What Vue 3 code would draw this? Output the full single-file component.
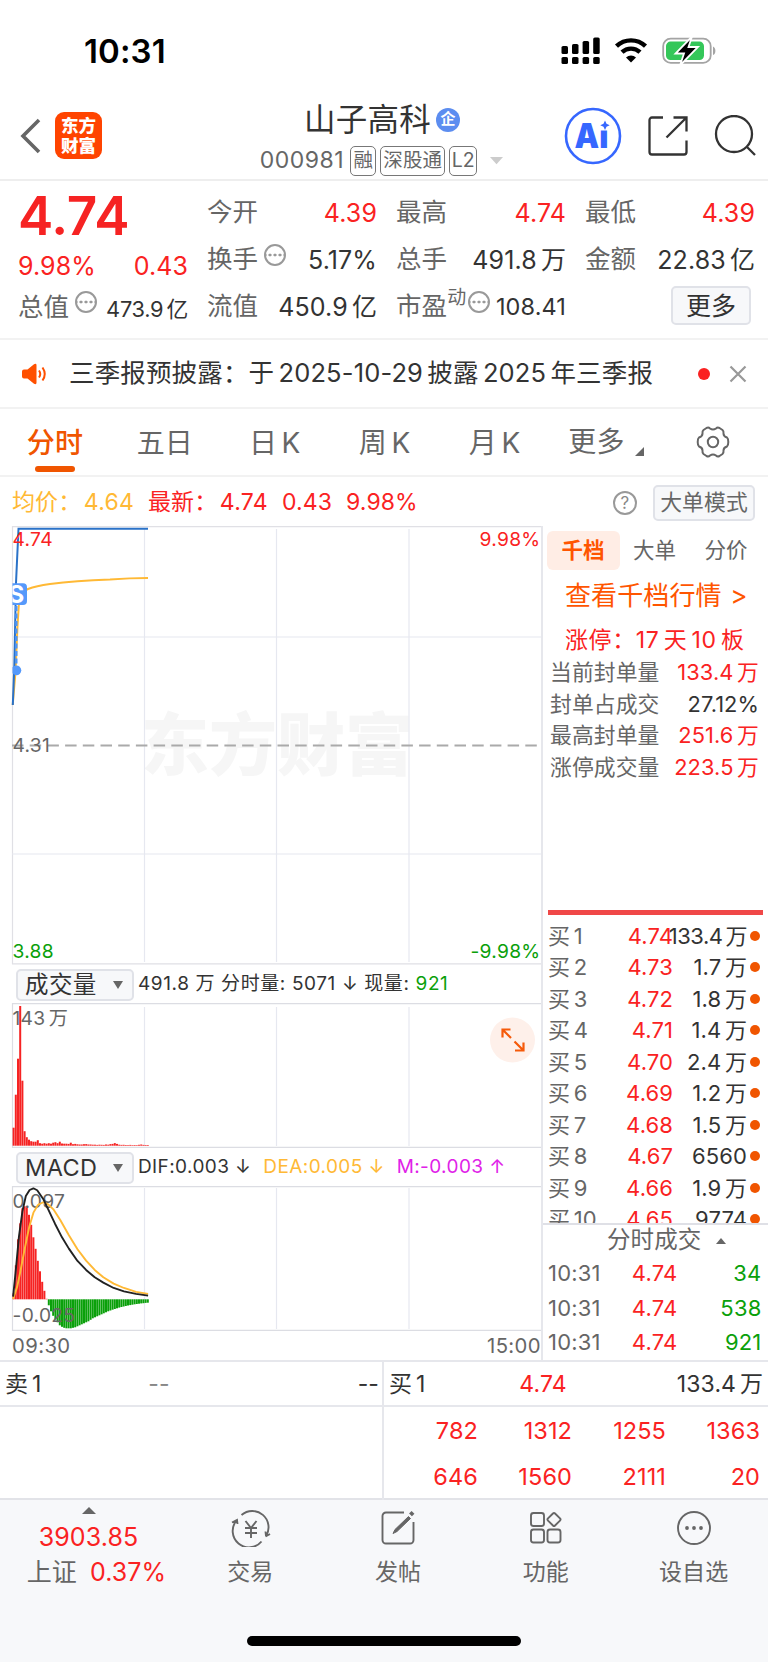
<script setup>
import { ref, computed } from 'vue';

const tabs = ['分时', '五日', '日 K', '周 K', '月 K'];
const activeTab = ref('分时');

const bookTabs = ['千档', '大单', '分价'];
const activeBook = ref('千档');

const limitInfo = [
  { label: '当前封单量', value: '133.4 万', red: true },
  { label: '封单占成交', value: '27.12%', red: false },
  { label: '最高封单量', value: '251.6 万', red: true },
  { label: '涨停成交量', value: '223.5 万', red: true },
];

const bids = [
  { price: '4.74', vol: '133.4 万' },
  { price: '4.73', vol: '1.7 万' },
  { price: '4.72', vol: '1.8 万' },
  { price: '4.71', vol: '1.4 万' },
  { price: '4.70', vol: '2.4 万' },
  { price: '4.69', vol: '1.2 万' },
  { price: '4.68', vol: '1.5 万' },
  { price: '4.67', vol: '6560' },
  { price: '4.66', vol: '1.9 万' },
  { price: '4.65', vol: '9774' },
];

const trades = [
  { time: '10:31', price: '4.74', vol: '34' },
  { time: '10:31', price: '4.74', vol: '538' },
  { time: '10:31', price: '4.74', vol: '921' },
];

const queue = ['782', '1312', '1255', '1363', '646', '1560', '2111', '20'];

// 1分钟一根，柱间距
const STEP = 2.2;
const gridX = [144.5, 276.5, 409];

const volumes = [
  18, 51, 87, 139.7, 65, 14.5, 8.5, 6, 4.5, 4, 4, 5.5, 2.5, 2, 2.5, 2, 2.5, 2, 3, 3.5, 2.5,
  4, 2.2, 2, 2, 1.8, 3, 1.5, 1.8, 1.4, 1.2, 1.2, 1.5, 1.6, 1.2, 1.2, 1, 1, 0.8, 1, 0.9,
  0.8, 1.2, 1, 1.6, 1.8, 2.6, 1.8, 1, 0.8, 0.9, 0.7, 0.6, 0.8, 0.6, 0.7, 0.6, 0.9, 1.2, 0.8, 0.7, 0.7,
];

const macd = [
  6, 34, 60, 76, 91, 93, 93, 84.5, 74.5, 62, 50.5, 38.5, 28, 17.5, 8.5, 0.5,
  -6, -12, -16.5, -20, -23, -26, -27.5, -28.5, -29, -29, -29, -28.5, -28, -27, -26, -25, -24,
  -23, -22, -20.5, -19, -18, -17, -16, -15, -14, -13, -12, -11.2, -10.4, -9.7,
  -9, -8.3, -7.7, -7.2, -6.7, -6.2, -5.8, -5.4, -5, -4.7, -4.4, -4.1, -3.9, -3.6, -3.4,
];

const toBars = (values, zero) => values.map((v, i) => ({
  x: 12.6 + i * STEP,
  y: v > 0 ? zero - v : zero,
  h: Math.abs(v),
  up: v > 0,
}));

const volumeBars = computed(() => toBars(volumes, 142.7));
const macdBars = computed(() => toBars(macd, 113.3));
</script>

<template>
  <div class="page">
    <div class="status-bar">
      <span class="clock">10:31</span>
      <svg class="status-icons" width="160" height="30" viewBox="0 0 160 30">
        <g fill="#000">
          <rect x="3.5" y="10" width="6.5" height="8" rx="1.6" />
          <rect x="14" y="8" width="6.5" height="10" rx="1.6" />
          <rect x="24.6" y="5" width="6.5" height="13" rx="1.6" />
          <rect x="35.2" y="1.5" width="6.5" height="16.5" rx="1.6" />
          <rect v-for="x in [3.5, 14, 24.6, 35.2]" :key="x" :x="x" y="21" width="6.5" height="7" rx="1.6" />
        </g>
        <g fill="none" stroke="#000" stroke-width="4.4">
          <path d="M58.5 10.2a21 21 0 0 1 29 0" />
          <path d="M64 16.2a13 13 0 0 1 18 0" />
        </g>
        <path d="M73 26.5l-5-5a7.2 7.2 0 0 1 10 0z" fill="#000" />
        <rect x="105.2" y="2.7" width="47.5" height="24.2" rx="7.5" fill="none" stroke="#a4a4a4" stroke-width="1.8" />
        <rect x="108" y="5.6" width="38" height="18.4" rx="4.5" fill="#34c759" />
        <path d="M155 10.5c3.2 1.3 3.2 7.3 0 8.6z" fill="#a4a4a4" />
        <path d="M134 .5l-16.500 17h8.500l-4 12 18-18.500h-9.500z" fill="#000" stroke="#fff" stroke-width="1.800" />
      </svg>
    </div>

    <div class="header">
      <svg class="back" width="22" height="38" viewBox="0 0 22 38">
        <path d="M19 3L3 19l16 16" fill="none" stroke="#666" stroke-width="3.6" />
      </svg>
      <div class="logo"><span>东方</span><span>财富</span></div>
      <div class="title">
        <div class="name">山子高科<i class="corp">企</i></div>
        <div class="code">
          <span class="digits">000981</span>
          <span class="tag t1">融</span>
          <span class="tag t3">深股通</span>
          <span class="tag t2">L2</span>
          <svg width="14" height="8" viewBox="0 0 14 8"><path d="M0 0h13l-6.5 7.2z" fill="#ccc" /></svg>
        </div>
      </div>
      <div class="actions">
        <svg width="58" height="58" viewBox="0 0 58 58">
          <circle cx="29" cy="29" r="27" fill="#fff" stroke="#3667ff" stroke-width="2.6" />
          <text x="10.5" y="40.5" class="ai" textLength="34" lengthAdjust="spacingAndGlyphs">Ai</text>
          <rect x="35.5" y="12" width="12" height="11.5" fill="#fff" />
          <path d="M41 13.500l1.500 3.200 3.200 1.500-3.200 1.500-1.500 3.200-1.500-3.200-3.200-1.500 3.200-1.500z" fill="#3667ff" />
        </svg>
        <svg width="40" height="40" viewBox="0 0 40 40" fill="none" stroke="#333" stroke-width="2.3">
          <path d="M15 1.5H4a2.5 2.5 0 0 0-2.5 2.5v32A2.5 2.5 0 0 0 4 38.5h32a2.5 2.5 0 0 0 2.5-2.500V24.5M25.5 1.5h13v14M38 2L18.5 21.5" />
        </svg>
        <svg width="42" height="42" viewBox="0 0 42 42" fill="none" stroke="#333" stroke-width="2.3">
          <circle cx="20" cy="19" r="18" />
          <path d="M32.5 31.5l8.5 8.5" />
        </svg>
      </div>
    </div>

    <div class="quote">
      <div class="col first">
        <div class="big">4.74</div>
        <div class="cell"><b class="red">9.98%</b><b class="red">0.43</b></div>
        <div class="cell"><span>总值</span><i class="more-dot"></i><b class="sm">473.9 亿</b></div>
      </div>
      <div class="col">
        <div class="cell"><span>今开</span><b class="red">4.39</b></div>
        <div class="cell"><span>换手</span><i class="more-dot"></i><b>5.17%</b></div>
        <div class="cell"><span>流值</span><b>450.9 亿</b></div>
      </div>
      <div class="col">
        <div class="cell"><span>最高</span><b class="red">4.74</b></div>
        <div class="cell"><span>总手</span><b>491.8 万</b></div>
        <div class="cell"><span>市盈</span><em>动</em><i class="more-dot tight"></i><b class="pe">108.41</b></div>
      </div>
      <div class="col">
        <div class="cell"><span>最低</span><b class="red">4.39</b></div>
        <div class="cell"><span>金额</span><b>22.83 亿</b></div>
        <div class="cell"><button class="btn-more">更多</button></div>
      </div>
    </div>

    <div class="notice">
      <svg width="28" height="24" viewBox="0 0 28 24">
        <path d="M1 9.5Q1 7.5 3 7.5h3.5L13 2.3q2.5-1.3 2.5 1v17.4q0 2.3-2.5 1L6.5 16.5H3q-2 0-2-2z" fill="#ff5000" />
        <path d="M18 8.5q2.5 3.5 0 7M21.5 5.5q4.5 6.5 0 13" fill="none" stroke="#ff5000" stroke-width="2" />
      </svg>
      <span class="notice-text">三季报预披露：于 2025-10-29 披露 2025 年三季报</span>
      <i class="dot"></i>
      <svg width="18" height="18" viewBox="0 0 18 18"><path d="M1.5 1.5l15 15M16.5 1.5l-15 15" stroke="#999" stroke-width="2.2" /></svg>
    </div>

    <div class="tabs">
      <div v-for="t in tabs" :key="t" class="tab" :class="{ active: t === activeTab }" @click="activeTab = t">{{ t }}</div>
      <div class="tab more">更多<svg width="10" height="10" viewBox="0 0 10 10"><path d="M9 0v9H0z" fill="#666" /></svg></div>
      <svg class="gear" width="34" height="34" viewBox="0 0 34 34" fill="none" stroke="#666" stroke-width="2" stroke-linejoin="round">
        <path d="M10.500 3Q12.500 2 14 3.500 17 5.500 20 3.500 21.500 2 23.500 3L26.500 5Q27.800 6 27.500 8.500 27.500 11.500 31 12.500 32.300 13.500 32.300 17 32.300 20.500 31 21.500 27.500 22.500 27.500 25.500 27.800 28 26.500 29L23.500 31Q21.500 32 20 30.500 17 28.500 14 30.500 12.500 32 10.500 31L7.500 29Q6.200 28 6.500 25.500 6.500 22.500 3 21.500 1.700 20.500 1.700 17 1.700 13.500 3 12.500 6.500 11.500 6.500 8.500 6.200 6 7.500 5z" />
        <circle cx="17" cy="17" r="5.2" />
      </svg>
    </div>

    <div class="summary">
      <span class="avg">均价：<b>4.64</b></span>
      <span class="red last">最新：<b>4.74</b></span>
      <span class="red">0.43</span>
      <span class="red pct">9.98%</span>
      <i class="help">?</i>
      <button class="btn-mode">大单模式</button>
    </div>

    <div class="main">
      <div class="charts">
        <svg width="541" height="438.5" viewBox="0 0 541 438.5">
          <text x="141" y="244" class="watermark" textLength="272">东方财富</text>
          <g stroke="#e6e8f0" stroke-width="1.2">
            <path d="M12 .6H541M12.5 0V438M12 437.8H541" stroke="#e0e0e5" />
            <path d="M12 111H541M12 328H541" />
            <path v-for="x in gridX" :key="x" :d="`M${x} 3V436`" />
          </g>
          <path d="M12 219.6H538" stroke="#aaa" stroke-width="2" stroke-dasharray="11.500 6.200" />
          <g fill="none" stroke-width="2">
            <path d="M12.700 179L15.500 146 17.500 100 19 76Q20 66 28 63 36 60 50 58 75 54.800 110 53.500 130 52 148 52" stroke="#ffb935" />
            <path d="M12.800 179L14.300 140.700 16 57 18.500 2.700H148" stroke="#2a72c8" />
            <path d="M16.300 80V139" stroke="#4c94f7" stroke-width="2.400" stroke-dasharray="5 2.500" />
          </g>
          <path d="M12.500 57.300H23q4 0 4 4V75q0 4-4 4H12.500z" fill="#5599fb" />
          <svg x="12.500" y="54" width="18" height="28"><text x="-4" y="23" class="sell">S</text></svg>
          <path d="M12.500 141.300a4.900 4.900 0 1 1 0 6z" fill="#5599fb" />
          <text x="12.500" y="19.800" class="axis red-t">4.74</text>
          <text x="540.500" y="19.800" class="axis red-t end">9.98%</text>
          <text x="12.500" y="226" class="axis">4.31</text>
          <text x="12.500" y="431.500" class="axis green-t">3.88</text>
          <text x="540.500" y="431.500" class="axis green-t end">-9.98%</text>
        </svg>

        <div class="indicator">
          <button class="picker">成交量<i></i></button>
          <span class="volume">491.8 万 分时量: 5071 ↓ 现量: <b class="green">921</b></span>
        </div>
        <svg width="541" height="145" viewBox="0 0 541 145">
          <g stroke="#e6e8f0" stroke-width="1.2">
            <path d="M12 .6H541M12.5 0V145M12 144.4H541" stroke="#dcdde3" />
            <path v-for="x in gridX" :key="x" :d="`M${x} 4V143`" />
          </g>
          <text x="12.500" y="22.300" class="axis">143 万</text>
          <rect v-for="(b, i) in volumeBars" :key="i" :x="b.x" :y="b.y" width="2" :height="b.h" fill="#f62323" />
          <circle cx="512.500" cy="37" r="22.500" fill="#fef0ea" />
          <path d="M502.500 34.500v-8h8M503 27l8 8M523.500 39.500v8h-8.500M523 47l-8.500-8.500" fill="none" stroke="#f55a0a" stroke-width="2.200" />
        </svg>

        <div class="indicator">
          <button class="picker">MACD<i></i></button>
          <span>DIF:0.003 ↓</span>
          <span class="dea">DEA:0.005 ↓</span>
          <span class="m">M:-0.003 ↑</span>
        </div>
        <svg width="541" height="145" viewBox="0 0 541 145">
          <g stroke="#e6e8f0" stroke-width="1.2">
            <path d="M12 .6H541M12.5 0V145M12 144.4H541" stroke="#dcdde3" />
            <path v-for="x in gridX" :key="x" :d="`M${x} 2V143`" />
          </g>
          <rect v-for="(b, i) in macdBars" :key="i" :x="b.x" :y="b.y" width="2" :height="b.h" :fill="b.up ? '#f62323' : '#0aa00a'" />
          <text x="12.500" y="22" class="axis">0.097</text>
          <text x="12.500" y="136" class="axis">-0.025</text>
          <g transform="translate(0 -226) scale(.3444 .3333)" fill="none" stroke-width="5.500" stroke-linejoin="round">
            <polyline stroke="#ffb935" points="38,1017 50,980 60,930 72,865 85,800 97,758 110,735 125,727 140,733 155,748 175,780 200,826 225,868 250,902 275,930 300,952 330,971 360,984 395,996 430,1002" />
            <polyline stroke="#222" points="38,1010 45,940 55,830 65,755 75,708 86,690 97,685 108,691 125,716 140,748 160,792 180,832 200,866 225,903 250,930 275,952 300,968 330,984 360,994 395,1002 430,1007" />
          </g>
        </svg>
        <div class="times"><span>09:30</span><span>15:00</span></div>
      </div>

      <div class="book">
        <div class="book-tabs">
          <div v-for="t in bookTabs" :key="t" :class="{ active: t === activeBook }" @click="activeBook = t">{{ t }}</div>
        </div>
        <div class="link">查看千档行情 &gt;</div>
        <div class="streak">涨停：17 天 10 板</div>
        <div v-for="row in limitInfo" :key="row.label" class="limit-row">
          <span>{{ row.label }}</span><b :class="{ red: row.red }">{{ row.value }}</b>
        </div>
        <div class="bar"></div>
        <div class="bids">
          <div v-for="(b, i) in bids" :key="i" class="bid">
            <span>买 {{ i + 1 }}</span>
            <b class="red">{{ b.price }}</b>
            <b class="vol" :class="{ long: b.vol.length > 6 }">{{ b.vol }}</b>
            <i></i>
          </div>
        </div>
        <div class="trade-title">分时成交<i></i></div>
        <div v-for="(t, i) in trades" :key="i" class="trade">
          <span>{{ t.time }}</span><b class="red">{{ t.price }}</b><b class="green">{{ t.vol }}</b>
        </div>
      </div>
    </div>

    <div class="depth">
      <div class="side">
        <div class="level"><span>卖 1</span><span class="none">--</span><span>--</span></div>
      </div>
      <div class="side buy">
        <div class="level"><span>买 1</span><span class="red">4.74</span><span>133.4 万</span></div>
        <div class="queue"><span v-for="(q, i) in queue" :key="i">{{ q }}</span></div>
      </div>
    </div>

    <div class="footer">
      <div class="index">
        <i></i>
        <b>3903.85</b>
        <div class="sh"><span>上证</span><b>0.37%</b></div>
      </div>
      <div class="nav">
        <svg width="40" height="38" viewBox="0 0 40 38" fill="none" stroke="#666" stroke-width="1.9">
          <path d="M10.5 6A16.300 16.300 0 0 1 35 27M35 27l-.5-4.500M34.500 27.500l4.500-2.500M30.500 32.500A16.300 16.300 0 0 1 5.500 11.500M1 13.500l5-2.500 .5 4" />
          <path d="M14.500 12l5.500 7 5.500-7M20 19v10M14 19h12M14 24h12" />
        </svg>
        <span>交易</span>
      </div>
      <div class="nav">
        <svg width="40" height="38" viewBox="0 0 40 38" fill="none" stroke="#666" stroke-width="1.9">
          <path d="M25 3.500H7A3.500 3.500 0 0 0 3.500 7v24A3.500 3.500 0 0 0 7 34.500h24a3.500 3.500 0 0 0 3.500-3.500V13" />
          <path d="M14 24.500l2-4L29.500 7.500l2 2L18 22.500z" fill="#666" stroke-width="1" />
          <path d="M31.500 5.800l2.500-2.500" stroke-width="4" />
        </svg>
        <span>发帖</span>
      </div>
      <div class="nav">
        <svg width="40" height="38" viewBox="0 0 40 38" fill="none" stroke="#666" stroke-width="1.9">
          <rect x="5" y="4" width="13" height="13" rx="2.5" />
          <rect x="5" y="20.5" width="13" height="13" rx="2.5" />
          <rect x="21.5" y="20.5" width="13" height="13" rx="2.5" />
          <rect x="23" y="5.5" width="10" height="10" rx="1.5" transform="rotate(45 28 10.5)" />
        </svg>
        <span>功能</span>
      </div>
      <div class="nav">
        <svg width="40" height="38" viewBox="0 0 40 38">
          <circle cx="20" cy="19" r="16" fill="none" stroke="#666" stroke-width="1.9" />
          <circle v-for="x in [13, 20, 27]" :key="x" :cx="x" cy="19" r="1.9" fill="#666" />
        </svg>
        <span>设自选</span>
      </div>
      <div class="home"></div>
    </div>
  </div>
</template>

<style>
body { margin: 0; background: #fff; }
</style>

<style scoped>
.page { width: 768px; height: 1663px; overflow: hidden; display: flex; flex-direction: column; background: #fff; color: #333; font-family: Inter, "Noto Sans CJK SC", sans-serif; font-size: 23px; font-weight: 400; line-height: 1.2; letter-spacing: 0.1px; }
.page * { box-sizing: border-box; word-spacing: -0.12em; }
svg { display: block; flex: none; }
b { font-weight: inherit; }
i, em { font-style: normal; }
button { font: inherit; color: inherit; letter-spacing: inherit; padding: 0; border: 2px solid #e0e2e8; border-radius: 5px; background: #f7f8fa; }
span, b { white-space: pre; }
.red { color: #fa2222; }
.green { color: #0aa00a; }

.status-bar { height: 90px; padding: 36px 48px 0 84px; display: flex; justify-content: space-between; }
.clock { font-size: 33px; font-weight: 600; line-height: 31px; color: #000; letter-spacing: 0.1px; }
.status-icons { margin-right: 2px; }

.header { height: 91px; border-bottom: 2px solid #eee; display: flex; }
.back { margin: 27px 0 0 20px; }
.logo { margin: 22px 0 0 13px; width: 47px; height: 47px; border-radius: 9px; background: #ff4400; color: #fff; font-size: 17.5px; font-weight: 900; line-height: 19.5px; padding-top: 4px; display: flex; flex-direction: column; align-items: center; }
.title { width: 300px; margin-left: 130px; padding-top: 10px; display: flex; flex-direction: column; align-items: center; }
.name { display: flex; align-items: center; font-size: 31.5px; line-height: 38px; height: 40px; letter-spacing: 0.3px; }
.corp { width: 24px; height: 24px; margin-left: 5px; border-radius: 50%; background: #5c8df0; color: #fff; font-size: 15px; font-weight: 700; line-height: 22px; text-align: center; }
.code { display: flex; align-items: center; height: 32px; margin-top: 5px; color: #666; }
.digits { font-size: 23px; margin-right: 6px; letter-spacing: 0.5px; }
.tag { height: 30px; border: 1.5px solid #777; border-radius: 5px; margin-right: 4px; font-size: 19.5px; line-height: 27px; text-align: center; }
.t1 { width: 26px; }
.t3 { width: 65px; }
.t2 { width: 28px; margin-right: 13px; }
.actions { margin-left: auto; padding: 17px 12px 0 0; display: flex; align-items: center; height: 75px; gap: 26px; }
.ai { font-size: 34px; font-weight: 900; fill: #3667ff; }

.quote { height: 159px; border-bottom: 2px solid #f2f2f2; padding: 8px 13px 0 18px; display: grid; grid-template-columns: 170px 170px 170px 170px; column-gap: 19px; }
.col { display: flex; flex-direction: column; }
.big { height: 57px; line-height: 54px; font-size: 53px; font-weight: 600; color: #f62323; letter-spacing: -0.2px; }
.cell { height: 47px; display: flex; align-items: center; justify-content: space-between; font-size: 25px; }
.first .cell { height: 40px; }
.first .cell:last-child { height: 42px; }
.cell span { color: #666; font-size: 25.5px; }
.cell .sm { font-size: 21.8px; padding-top: 4px; letter-spacing: -0.3px; }
.cell em { font-size: 19px; color: #666; margin-top: -16px; }
.cell .pe { font-size: 23.5px; padding-top: 2px; margin-left: auto; }
.more-dot { width: 22px; height: 22px; border: 2px solid #999; border-radius: 50%; margin: -10px auto 0 6px; background: radial-gradient(circle, #999 1.3px, transparent 1.7px) center / 5px 18px repeat-x; }
.more-dot.tight { margin: -10px 0 0 2px; }
.btn-more { width: 80px; height: 39px; margin: -2px 4px 0 auto; }

.notice { height: 69px; border-bottom: 2px solid #f2f2f2; display: flex; align-items: center; padding: 0 21px; }
.notice-text { margin-left: 20px; width: 632px; font-size: 25.5px; letter-spacing: 0.15px; }
.dot { width: 12px; height: 12px; border-radius: 50%; background: #fa2222; margin-right: 19px; }

.tabs { height: 68px; border-bottom: 2px solid #f2f2f2; display: flex; align-items: center; color: #666; font-size: 28px; }
.tab { width: 109.9px; height: 68px; line-height: 70px; text-align: center; white-space: pre; }
.tab.active { color: #f05500; font-weight: 500; display: flex; flex-direction: column; align-items: center; }
.tab.active::after { content: ""; width: 40px; height: 6px; border-radius: 3px; background: #f05500; margin-top: -12px; flex: none; }
.tab.more { width: 100px; margin-left: 7px; display: flex; align-items: center; justify-content: center; }
.tab.more svg { margin: 20px 0 0 10px; }
.gear { margin-left: 40px; }

.summary { height: 49px; display: flex; align-items: center; padding: 2px 13px 0 12px; }
.avg { color: #ffb935; width: 136px; }
.summary span b { margin-left: 2.5px; letter-spacing: 0.3px; }
.last { width: 134px; }
.pct { margin-left: 14px; }
.help { width: 24px; height: 24px; border: 2px solid #999; border-radius: 50%; margin-left: auto; font-size: 17px; line-height: 20px; text-align: center; color: #888; }
.btn-mode { width: 102px; height: 36px; margin-left: 16px; font-size: 21.8px; color: #666; }

.main { height: 835.5px; display: grid; grid-template-columns: 541px 227px; border-bottom: 2px solid #e6e7ec; }
.charts { display: flex; flex-direction: column; }
.axis { font-size: 19.2px; fill: #666; letter-spacing: 0.3px; }
.red-t { fill: #fa2222; }
.green-t { fill: #0aa00a; }
.end { text-anchor: end; }
.sell { font-size: 24px; font-weight: 700; fill: #fff; }
.watermark { font-size: 68px; font-weight: 900; fill: #f6f6f6; }
.indicator { height: 38.25px; display: flex; align-items: center; padding: 2px 0 0 16px; font-size: 19px; letter-spacing: 0.4px; }
.indicator span { word-spacing: 0; }
.indicator .volume { letter-spacing: 0.6px; }
.picker { width: 118px; height: 32px; padding: 0 9px 0 7px; margin-right: 4px; display: flex; align-items: center; justify-content: space-between; font-size: 23.5px; }
.picker i { border: 5px solid transparent; border-top: 8px solid #666; border-bottom: 0; }
.dea { color: #ffb935; margin-left: 12px; }
.m { color: #e022e8; margin-left: 12px; }
.times { height: 30px; display: flex; justify-content: space-between; align-items: center; padding-left: 12px; font-size: 20.3px; color: #666; letter-spacing: 0.4px; }

.book { border-left: 2px solid #e6e7ec; padding-left: 5px; display: flex; flex-direction: column; }
.book-tabs { display: flex; height: 45px; padding-top: 5px; font-size: 21.5px; color: #666; line-height: 38px; }
.book-tabs div { width: 73px; height: 39px; text-align: center; border-radius: 6px; margin-left: -1.5px; }
.book-tabs div.active { background: #ffede5; color: #ff5500; font-weight: 700; }
.link { height: 51px; line-height: 50px; color: #ff5500; font-size: 26px; padding-left: 17px; white-space: pre; word-spacing: 0.05em; }
.streak { height: 34px; line-height: 37px; color: #fa2222; font-size: 23px; padding-left: 17px; white-space: pre; letter-spacing: 0.6px; }
.limit-row { height: 31.5px; display: flex; justify-content: space-between; align-items: center; padding: 1px 9px 0 2px; font-size: 21.8px; }
.limit-row span { color: #666; }
.bar { height: 5px; width: 215px; margin-top: 128px; background: #f04848; flex: none; }
.bids { height: 310px; overflow: hidden; padding-top: 5px; border-bottom: 2px solid #dfe0e6; margin-left: -5px; padding-left: 5px; flex: none; }
.bid { height: 31.5px; display: grid; grid-template-columns: 50px 75px 74px 10px; align-items: center; font-size: 22px; }
.bid span { color: #666; }
.bid b { text-align: right; }
.bid b.vol { justify-self: end; }
.bid b.long { letter-spacing: -0.5px; }
.bid i { width: 10px; height: 10px; border-radius: 50%; background: #f05500; margin-left: 3px; }
.trade-title { height: 31px; font-size: 23.5px; color: #666; padding-left: 59px; display: flex; align-items: center; }
.trade-title i { border: 5px solid transparent; border-bottom: 6px solid #666; border-top: 0; margin-left: 15px; }
.trade { height: 34.5px; display: grid; grid-template-columns: 60px 69.5px 84px; align-items: center; font-size: 22px; letter-spacing: 0.2px; }
.trade span { color: #666; }
.trade b { text-align: right; }

.depth { height: 138px; display: grid; grid-template-columns: 382px 386px; border-bottom: 2px solid #e2e3e8; }
.side.buy { border-left: 2px solid #e6e7ec; }
.level { height: 45px; border-bottom: 2px solid #e6e7ec; display: grid; grid-template-columns: 129px 50px 1fr; align-items: center; padding: 3px 3px 0 5px; }
.level span:nth-child(2) { text-align: center; }
.level span:last-child { text-align: right; }
.buy .level { padding: 3px 5px 0 5px; }
.none { color: #888; }
.queue { display: grid; grid-template-columns: 94px repeat(3, 94px); grid-auto-rows: 46px; align-items: center; text-align: right; color: #fa2222; font-size: 23.5px; padding-top: 2px; }

.footer { height: 162.5px; background: #f7f8fa; display: grid; grid-template-columns: 177px repeat(4, 147.75px); grid-template-rows: 136.5px 26px; }
.index { display: flex; flex-direction: column; align-items: center; font-size: 25px; color: #666; padding-top: 7px; }
.index i { border: 7px solid transparent; border-bottom: 7px solid #666; border-top: 0; }
.index b { color: #fa2222; line-height: 46px; height: 46px; }
.sh { display: flex; align-items: center; gap: 13px; height: 26px; margin: -1px 0 0 16px; }
.nav { display: flex; flex-direction: column; align-items: center; padding-top: 9px; font-size: 23px; color: #666; }
.nav span { line-height: 26px; margin: 12px 1px 0 0; }
.home { grid-column: 1 / -1; justify-self: center; width: 274px; height: 10px; border-radius: 5px; background: #000; }
</style>
